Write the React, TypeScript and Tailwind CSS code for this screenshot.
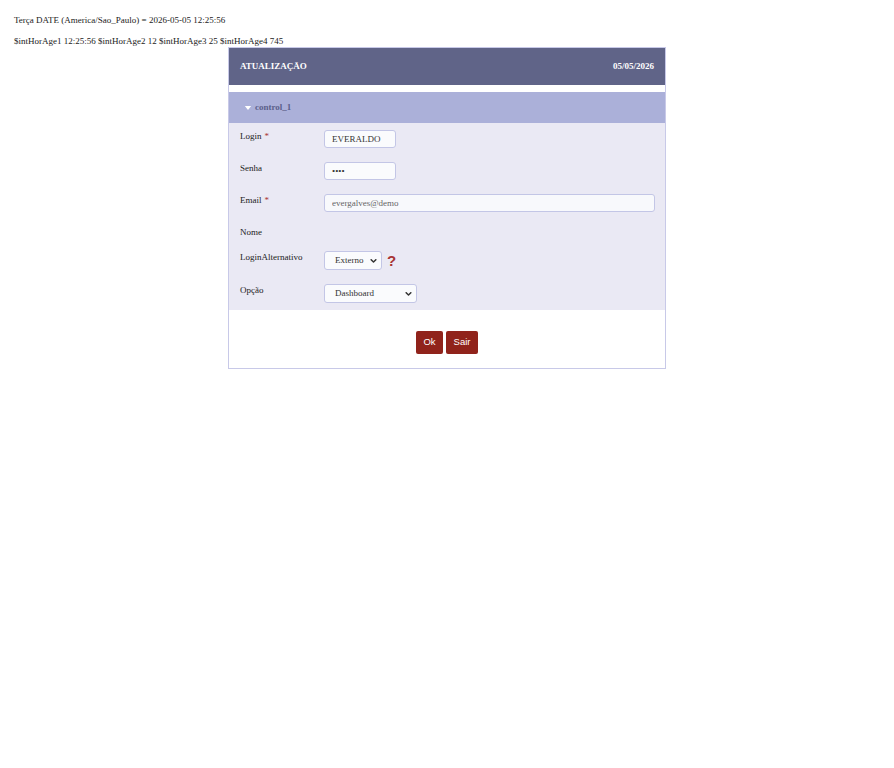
import React from 'react'

const serif = "font-['Liberation_Serif','Times_New_Roman',serif]"

function Chevron() {
  return (
    <svg
      viewBox="0 0 10 6"
      className="pointer-events-none absolute right-[5px] top-1/2 h-[4px] w-[7px] -translate-y-1/2"
    >
      <path d="M1.5 1l3.5 3.5L8.5 1" fill="none" stroke="#333" strokeWidth="2.2" strokeLinecap="round" strokeLinejoin="round" />
    </svg>
  )
}

function Select({ value, options, width }: { value: string; options: string[]; width: string }) {
  return (
    <div className={`relative ${width}`}>
      <select
        defaultValue={value}
        className={`block h-[19px] w-full appearance-none rounded-[3px] border border-[#c3c6e6] bg-[#fafbfd] pl-[10px] text-[9px] text-[#333] outline-none ${serif}`}
      >
        {options.map((o) => (
          <option key={o}>{o}</option>
        ))}
      </select>
      <Chevron />
    </div>
  )
}

function Label({ text, required }: { text: string; required?: boolean }) {
  return (
    <div className="w-[84px] shrink-0 pt-[6px] text-[9px] leading-[15px] text-[#222]">
      {text}
      {required && <span className="ml-[3px] text-[#a33]">*</span>}
    </div>
  )
}

const inputCls = `block h-[18px] rounded-[3px] border border-[#c3c6e6] bg-[#fafbfd] px-[7px] text-[9px] text-[#333] outline-none ${serif}`

export default function App() {
  return (
    <div className={`min-h-screen bg-white ${serif}`}>
      <div className="px-[14px] pt-[14px] text-[9px] leading-[12px] text-[#222]">
        <p>Terça DATE (America/Sao_Paulo) = 2026-05-05 12:25:56</p>
        <p className="mt-[9px]">$intHorAge1 12:25:56 $intHorAge2 12 $intHorAge3 25 $intHorAge4 745</p>
      </div>

      {/* painel */}
      <div className="mx-auto w-[438px] border border-[#c8c9e8] bg-white">
        <div className="flex h-[37px] items-center justify-between bg-[#606488] px-[11px] text-[9px] font-bold text-white">
          <span>ATUALIZAÇÃO</span>
          <span>05/05/2026</span>
        </div>
        <div className="h-[7px]" />
        <div className="flex h-[31px] items-center bg-[#abb0d9] pl-[15px] text-[9px] font-bold text-[#5b5f8a]">
          <svg viewBox="0 0 8 5" className="mr-[3px] h-[4px] w-[8px]">
            <path d="M0 0h8L4 5z" fill="#fff" />
          </svg>
          control_1
        </div>

        <div className="bg-[#eae9f4] pl-[11px] pr-[10px]">
          <div className="flex h-[32px]">
            <Label text="Login" required />
            <div className="pt-[7px]">
              <input readOnly value="EVERALDO" className={`${inputCls} w-[72px]`} />
            </div>
          </div>
          <div className="flex h-[32px]">
            <Label text="Senha" />
            <div className="pt-[7px]">
              <input readOnly type="password" value="1234" className={`${inputCls} w-[72px]`} />
            </div>
          </div>
          <div className="flex h-[32px]">
            <Label text="Email" required />
            <div className="flex-1 pt-[7px]">
              <input readOnly value="evergalves@demo" className={`${inputCls} w-full !bg-[#f8f9fc] !text-[#666]`} />
            </div>
          </div>
          <div className="flex h-[25px]">
            <Label text="Nome" />
          </div>
          <div className="flex h-[33px]">
            <Label text="LoginAlternativo" />
            <div className="flex items-start pt-[7px]">
              <Select value="Externo" options={['Externo', 'Interno']} width="w-[58px]" />
              <span className="ml-[5px] mt-[1px] font-['Liberation_Sans',Arial,sans-serif] text-[15px] leading-[17px] font-bold text-[#a83434]">
                ?
              </span>
            </div>
          </div>
          <div className="flex h-[33px]">
            <Label text="Opção" />
            <div className="pt-[7px]">
              <Select value="Dashboard" options={['Dashboard', 'Relatórios']} width="w-[93px]" />
            </div>
          </div>
        </div>

        <div className="flex justify-center gap-[3px] pb-[14px] pt-[21px] font-['Liberation_Sans',Arial,sans-serif]">
          <button className="h-[23px] rounded-[2px] bg-[#90231b] px-[7.5px] text-[9.5px] text-white">Ok</button>
          <button className="h-[23px] rounded-[2px] bg-[#90231b] px-[7.5px] text-[9.5px] text-white">Sair</button>
        </div>
      </div>
    </div>
  )
}
